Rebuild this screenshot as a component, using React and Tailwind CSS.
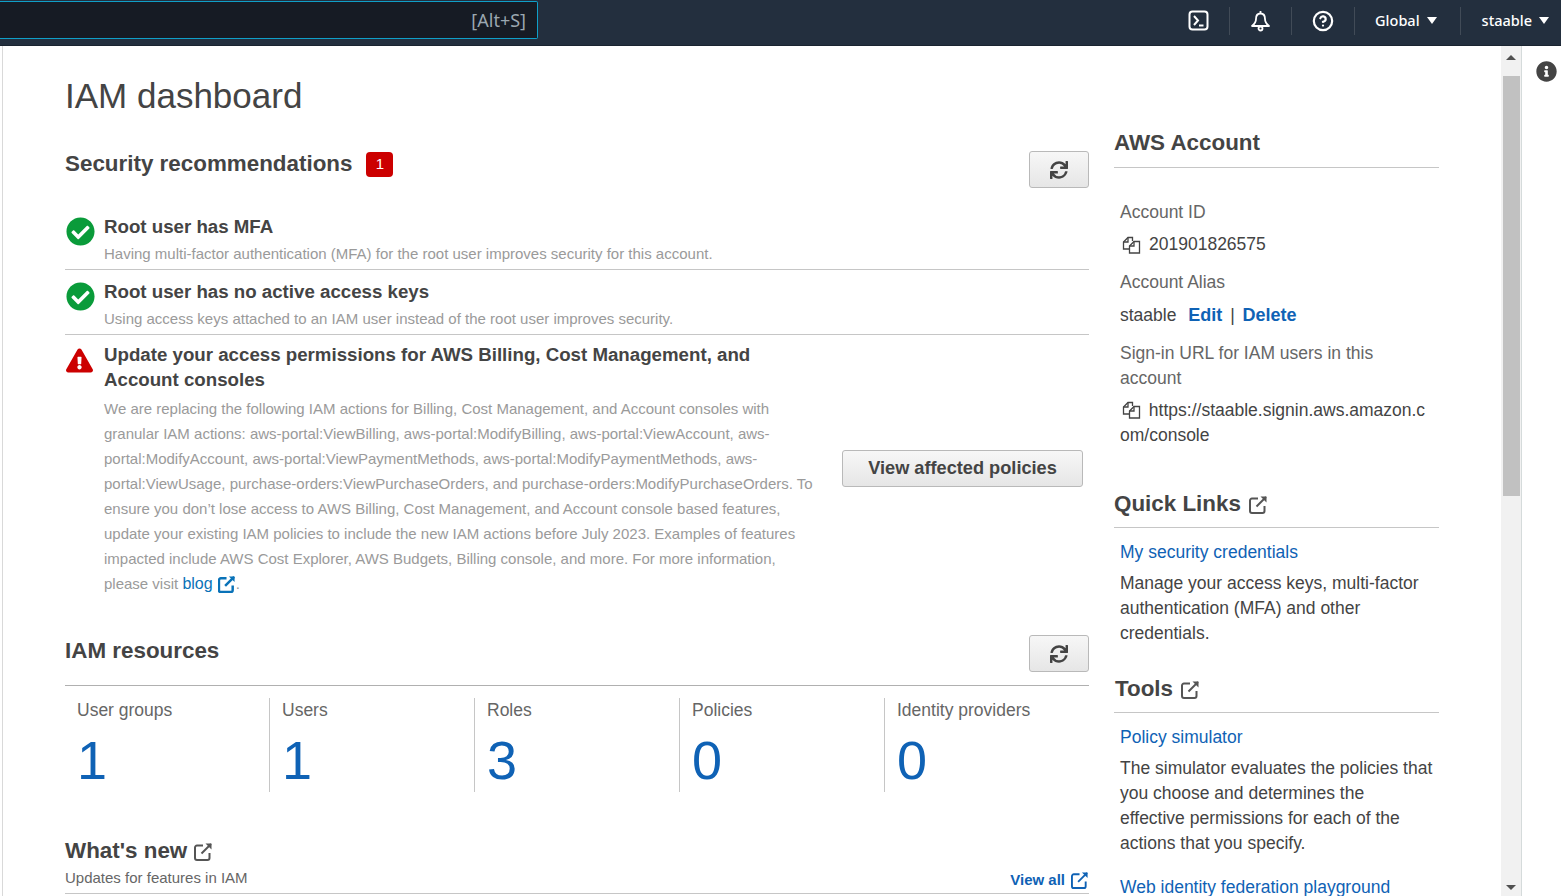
import React from 'react';
import { CircleHelp } from 'lucide-react';
import { FaCheckCircle, FaExclamationTriangle, FaInfoCircle, FaSync } from 'react-icons/fa';

const TerminalIcon = () => (
    <svg width="21" height="21" viewBox="0 0 21 21" fill="none" stroke="white" strokeWidth="2">
        <rect x="1.5" y="1.5" width="18" height="18" rx="3" />
        <path d="M6 6l4 4.500-4 4.500" />
        <path d="M11 15.500h4.500" />
    </svg>
);

const BellIcon = () => (
    <svg width="21" height="22" viewBox="0 0 21 22" fill="none" stroke="white" strokeWidth="1.8">
        <path d="M10.500 1v2.500" />
        <path d="M10.500 3.500c-3.500 0-4.500 2.500-4.500 5.500 0 3-1.500 5-4 7h17c-2.500-2-4-4-4-7 0-3-1-5.500-4.500-5.500z" strokeLinejoin="round" />
        <circle cx="10.500" cy="18.500" r="2" />
    </svg>
);

const CopyIcon = () => (
    <svg width="19" height="18" viewBox="0 0 19 18" fill="none" stroke="#444" strokeWidth="1.3" className="shrink-0">
        <path d="M10.500 5V1.500H6L1.500 6V13H7" />
        <path d="M6 1.500V6H1.500" />
        <path d="M12 5.500H17.500V17H7.500V10z" />
        <path d="M12 5.500V10H7.500" />
    </svg>
);

const Caret = () => (
    <span className="inline-block w-0 h-0 border-x-[5.5px] border-x-transparent border-t-[7px] border-t-white ml-[7px]" />
);

const Divider = () => <div className="w-px h-7 bg-[#414b57]" />;

const RefreshButton = () => (
    <button className="w-[60px] h-[37px] flex items-center justify-center rounded-[3px] border border-[#b9b9b9] bg-gradient-to-b from-[#f7f7f7] to-[#e6e6e6] text-[#444]">
        <FaSync size={18} />
    </button>
);

// square with an arrow leaving its top right corner
const External = ({ size = 19, color = '#555', weight = 2 }) => (
    <svg width={size} height={size} viewBox="0 0 19 19" fill="none" stroke={color} strokeWidth={weight} className="shrink-0 inline-block">
        <path d="M9 3.500H3a2 2 0 0 0-2 2V16a2 2 0 0 0 2 2h10.500a2 2 0 0 0 2-2v-5" />
        <path d="M7.500 11.500L17 2" />
        <path d="M11.500 1.500H17.500V7.500" fill={color} stroke="none" />
    </svg>
);

const Rec = ({ title, text }) => (
    <div className="flex h-[65px] border-b border-[#c6c6c6]">
        <FaCheckCircle size={29} className="text-[#0a9b3a] mt-[12px] ml-[1px] shrink-0" />
        <div className="ml-[9px] pt-[9px]">
            <div className="text-[18.7px] leading-[25px] font-bold text-[#444]">{title}</div>
            <div className="text-[15px] leading-[25px] mt-[2px] text-[#9a9a9a]">{text}</div>
        </div>
    </div>
);

const Stat = ({ label, value, first }) => (
    <div className={`h-[94px] pl-3 ${first ? 'w-[204px]' : 'w-[205px] border-l border-[#c6c6c6]'}`}>
        <div className="text-[17.5px] leading-[25px] text-[#666]">{label}</div>
        <div className="text-[54px] leading-[64px] mt-[5px] text-[#0f62b5]">{value}</div>
    </div>
);

export default function App() {
    return (
        <div className="w-[1561px] h-[896px] overflow-hidden flex flex-col bg-white font-['Liberation_Sans',sans-serif]">
            <header className="h-[46px] shrink-0 bg-[#232f3e] border-b border-[#1a2430] flex items-center pb-[4px] text-white font-['Noto_Sans',sans-serif]">
                <div className="w-[538px] h-[38px] self-start mt-[1px] bg-[#161b24] border border-[#0f9fc8] border-l-0 rounded-r-[2px] flex items-center justify-end pr-[11px] text-[18px] text-[#9ba7b0]">
                    [Alt+S]
                </div>
                <div className="flex-1 flex items-center justify-end gap-[20px] pr-[12px]">
                    <TerminalIcon />
                    <Divider />
                    <BellIcon />
                    <Divider />
                    <CircleHelp size={22} strokeWidth={2.4} />
                    <Divider />
                    <span className="text-[14.5px] font-medium flex items-center mr-[3px]">Global<Caret /></span>
                    <Divider />
                    <span className="text-[14.5px] font-medium flex items-center ml-[1px]">staable<Caret /></span>
                </div>
            </header>

            <div className="flex flex-1 min-h-0">
                <div className="w-[3px] shrink-0 border-r border-[#d9d9d9]" />
                <main className="w-[1498px] shrink-0 flex pl-[62px] overflow-hidden">
                    <section className="w-[1024px] shrink-0">
                        <h1 className="text-[35px] leading-[40px] text-[#444] mt-[30px]">IAM dashboard</h1>

                        <div className="flex justify-between items-start mt-[35px]">
                            <div className="flex items-center -mt-[2px]">
                                <h2 className="text-[22.4px] leading-[30px] font-bold text-[#444]">Security recommendations</h2>
                                <span className="ml-[14px] w-[27px] h-[25px] rounded-[4px] bg-[#cc0000] text-white text-[15px] flex items-center justify-center">1</span>
                            </div>
                            <RefreshButton />
                        </div>

                        <div className="mt-[17px]">
                            <Rec title="Root user has MFA" text="Having multi-factor authentication (MFA) for the root user improves security for this account." />
                            <Rec title="Root user has no active access keys" text="Using access keys attached to an IAM user instead of the root user improves security." />
                            <div className="flex">
                                <FaExclamationTriangle size={27} className="text-[#cc0000] mt-[12px] ml-[1px] shrink-0" />
                                <div className="ml-[11px] w-[720px] pt-[7px]">
                                    <div className="text-[18.7px] leading-[25px] font-bold text-[#444] w-[700px]">
                                        Update your access permissions for AWS Billing, Cost Management, and Account consoles
                                    </div>
                                    <p className="text-[15px] leading-[25px] mt-[4px] text-[#9a9a9a]">
                                        We are replacing the following IAM actions for Billing, Cost Management, and Account consoles with granular IAM actions: aws-portal:ViewBilling, aws-portal:ModifyBilling, aws-portal:ViewAccount, aws-portal:ModifyAccount, aws-portal:ViewPaymentMethods, aws-portal:ModifyPaymentMethods, aws-portal:ViewUsage, purchase-orders:ViewPurchaseOrders, and purchase-orders:ModifyPurchaseOrders. To ensure you don’t lose access to AWS Billing, Cost Management, and Account console based features, update your existing IAM policies to include the new IAM actions before July 2023. Examples of features impacted include AWS Cost Explorer, AWS Budgets, Billing console, and more. For more information, please visit{' '}
                                        <a className="text-[16px] text-[#0972b8]">blog</a>
                                        <span className="inline-block align-[1px] h-[18px] leading-none ml-[5px]"><External size={18} color="#0972b8" weight={2.6} /></span>.
                                    </p>
                                </div>
                                <button className="ml-[18px] mt-[115px] w-[241px] h-[37px] rounded-[3px] border border-[#b9b9b9] bg-gradient-to-b from-[#f7f7f7] to-[#e6e6e6] text-[18.2px] font-bold text-[#444]">
                                    View affected policies
                                </button>
                            </div>
                        </div>

                        <div className="flex justify-between items-start h-[37px] mt-[39px]">
                            <h2 className="text-[22.4px] leading-[30px] font-bold text-[#444] mt-[1px]">IAM resources</h2>
                            <RefreshButton />
                        </div>
                        <div className="border-t border-[#b0b0b0] mt-[13px] pt-[12px] flex">
                            <Stat first label="User groups" value="1" />
                            <Stat label="Users" value="1" />
                            <Stat label="Roles" value="3" />
                            <Stat label="Policies" value="0" />
                            <Stat label="Identity providers" value="0" />
                        </div>

                        <div className="mt-[44px] flex justify-between items-end border-b border-[#c6c6c6] h-[58px] pb-[3px]">
                            <div>
                                <h2 className="text-[22.4px] leading-[30px] font-bold text-[#444] flex items-center gap-[7px]">What's new <External /></h2>
                                <div className="text-[15px] leading-[25px] -mt-[1px] text-[#666]">Updates for features in IAM</div>
                            </div>
                            <a className="text-[15px] font-bold text-[#0f62b5] flex items-center gap-[6px] -mb-[1px]">View all <External size={18} color="#0f62b5" /></a>
                        </div>
                    </section>

                    <aside className="w-[325px] ml-[25px] shrink-0 text-[17.5px] leading-[25px] text-[#444]">
                        <div className="mt-[82px] border-b border-[#c6c6c6] pb-[9px]">
                            <h2 className="text-[22.4px] leading-[30px] font-bold">AWS Account</h2>
                        </div>
                        <div className="pl-[6px]">
                            <div className="mt-[32px] text-[#666]">Account ID</div>
                            <div className="mt-[7px] flex items-center gap-[8px] ml-[2px]"><CopyIcon />201901826575</div>
                            <div className="mt-[13px] text-[#666]">Account Alias</div>
                            <div className="mt-[8px]">staable <a className="ml-[7px] text-[18px] font-bold text-[#0f62b5]">Edit</a> <span className="mx-[3px]">|</span> <a className="text-[18px] font-bold text-[#0f62b5]">Delete</a></div>
                            <div className="mt-[13px] text-[#666]">Sign-in URL for IAM users in this account</div>
                            <div className="mt-[7px] w-[308px] [word-break:break-all]"><span className="inline-block align-[-3px] ml-[2px] mr-[3px]"><CopyIcon /></span> https://staable.signin.aws.amazon.com/console</div>
                        </div>
                        <h2 className="mt-[41px] text-[22.4px] leading-[30px] font-bold flex items-center gap-[8px]">Quick Links <External /></h2>
                        <div className="mt-[8px] border-t border-[#c6c6c6] pl-[6px]">
                            <a className="block mt-[12px] text-[#0f62b5]">My security credentials</a>
                            <p className="mt-[6px]">Manage your access keys, multi-factor authentication (MFA) and other credentials.</p>
                        </div>
                        <h2 className="mt-[28px] ml-[1px] text-[22.4px] leading-[30px] font-bold flex items-center gap-[8px]">Tools <External /></h2>
                        <div className="mt-[8px] border-t border-[#c6c6c6] pl-[6px]">
                            <a className="block mt-[12px] text-[#0f62b5]">Policy simulator</a>
                            <p className="mt-[6px]">The simulator evaluates the policies that<br />you choose and determines the<br />effective permissions for each of the<br />actions that you specify.</p>
                            <a className="block mt-[19px] text-[#0f62b5]">Web identity federation playground</a>
                        </div>
                    </aside>
                </main>

                <div className="w-[20px] shrink-0 bg-[#f1f1f1] flex flex-col items-center">
                    <div className="mt-[9px] w-0 h-0 border-x-[5px] border-x-transparent border-b-[5px] border-b-[#505050]" />
                    <div className="mt-[16px] w-[17px] h-[420px] bg-[#c1c1c1] self-start ml-[2px]" />
                    <div className="mt-auto mb-[6px] w-0 h-0 border-x-[5px] border-x-transparent border-t-[5px] border-t-[#505050]" />
                </div>
                <div className="flex-1 border-l border-[#d5dbdb] flex justify-center pt-[15px]">
                    <FaInfoCircle size={21} className="text-[#444] ml-[10px]" />
                </div>
            </div>
        </div>
    );
}
